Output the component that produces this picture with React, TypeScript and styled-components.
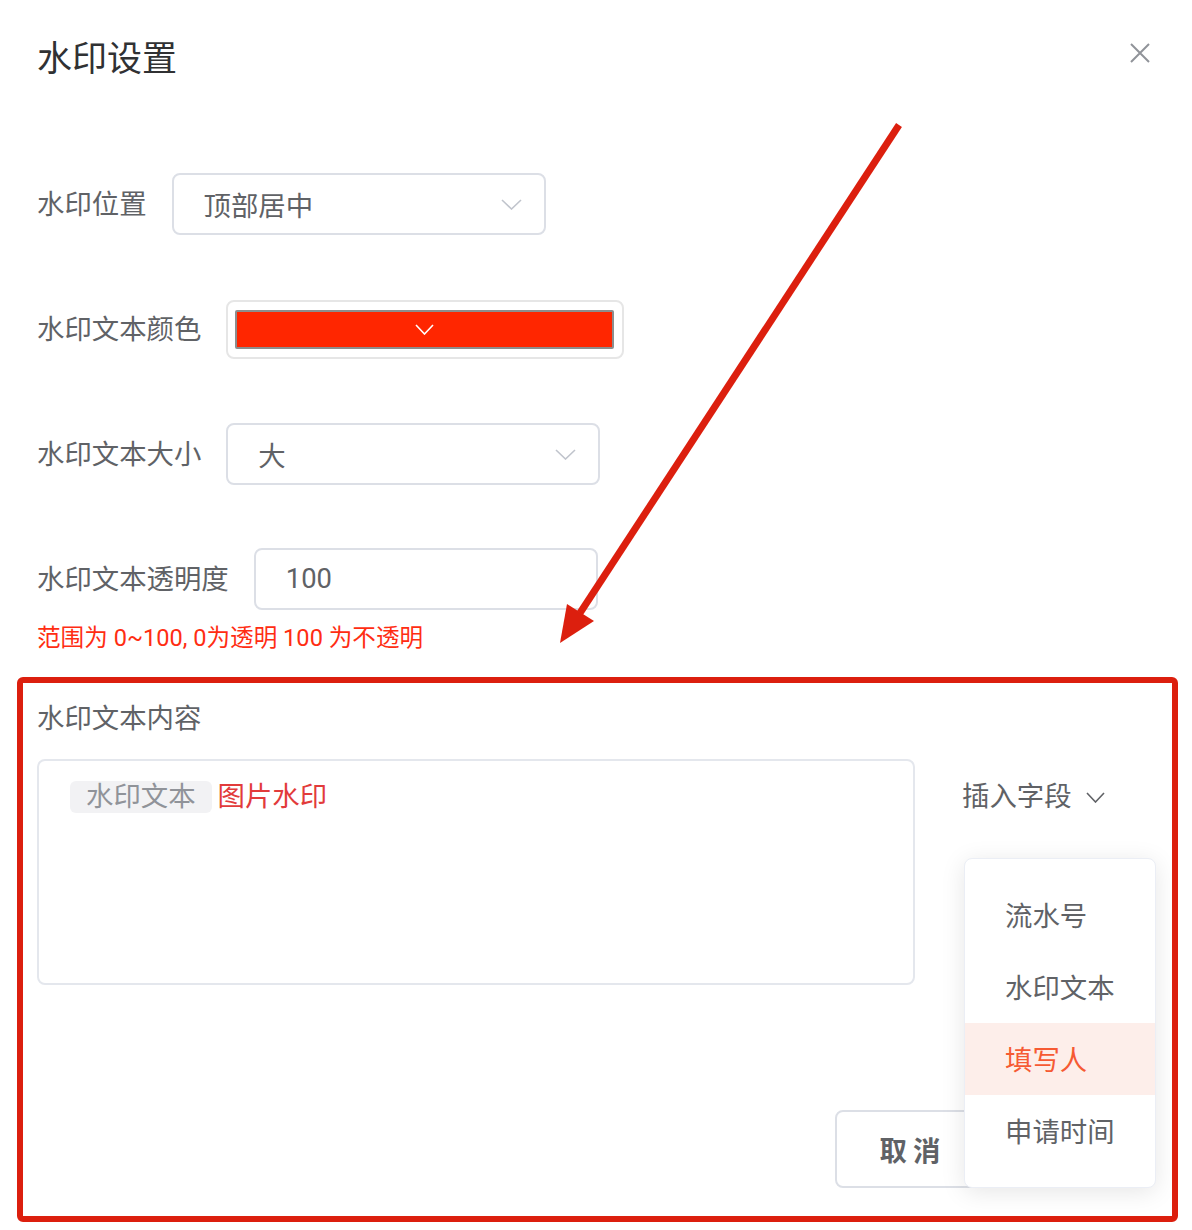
import React from "react";
import styled, { createGlobalStyle } from "styled-components";

const GlobalStyle = createGlobalStyle`
  html, body { margin: 0; padding: 0; background: #ffffff; }
  body { font-family: Roboto, "Noto Sans CJK SC", sans-serif; overflow: hidden; }
  * { box-sizing: border-box; }
`;

const Page = styled.div`
  position: relative;
  width: 1192px;
  height: 1230px;
  padding: 38px 37px 0 37px;
  background: #fff;
`;

const Header = styled.div`
  display: flex;
  justify-content: space-between;
  align-items: flex-start;
`;

const Title = styled.h1`
  margin: 0;
  font-size: 35px;
  line-height: 44px;
  font-weight: 400;
  color: #303133;
`;

const CloseButton = styled.button`
  width: 30px;
  height: 30px;
  padding: 0;
  border: none;
  background: transparent;
  display: flex;
  align-items: center;
  justify-content: center;
`;

const Form = styled.div`
  margin-top: 91px;
  display: flex;
  flex-direction: column;
`;

const FormItem = styled.div<{ $mb: number }>`
  display: flex;
  align-items: center;
  height: 62px;
  margin-bottom: ${(p) => p.$mb}px;
`;

const Label = styled.span`
  font-size: 27.4px;
  line-height: 40px;
  padding-top: 2px;
  color: #606266;
  margin-right: 25px;
  white-space: nowrap;
`;

const SelectBox = styled.div<{ $w: number }>`
  width: ${(p) => p.$w}px;
  height: 62px;
  border: 2px solid #dcdfe6;
  border-radius: 8px;
  padding: 0 22px 0 30px;
  display: flex;
  align-items: center;
  justify-content: space-between;
  font-size: 27.4px;
  color: #606266;
`;

const ColorPicker = styled.div`
  width: 398px;
  height: 59px;
  border: 2px solid #e6e6e6;
  border-radius: 8px;
  padding: 8px 8px 8px 7px;
  display: flex;
`;

const ColorSwatch = styled.div<{ $color: string }>`
  flex: 1;
  background: ${(p) => p.$color};
  border: 2px solid #8d8d8d;
  border-radius: 2px;
  display: flex;
  align-items: center;
  justify-content: center;
`;

const Hint = styled.div`
  font-size: 23.6px;
  line-height: 32px;
  color: #ff2d12;
`;

const SectionLabel = styled.div`
  margin-top: 45px;
  font-size: 27.4px;
  line-height: 40px;
  color: #606266;
`;

const ContentRow = styled.div`
  margin-top: 20px;
  display: flex;
  align-items: flex-start;
`;

const TextArea = styled.div`
  width: 878px;
  height: 226px;
  border: 2px solid #e4e7ed;
  border-radius: 8px;
  padding: 20px 31px;
  display: flex;
  align-items: flex-start;
`;

const Tag = styled.span`
  height: 32px;
  line-height: 32px;
  padding: 0 16px;
  border-radius: 6px;
  background: #f2f2f4;
  color: #909399;
  font-size: 27.4px;
`;

const ImageMark = styled.span`
  margin-left: 6px;
  line-height: 32px;
  font-size: 27.4px;
  color: #e23b3b;
`;

const InsertWrap = styled.div`
  position: relative;
  margin-left: 47px;
`;

const InsertTrigger = styled.div`
  margin-top: 18px;
  display: flex;
  align-items: center;
  gap: 14px;
  font-size: 27.4px;
  line-height: 40px;
  color: #606266;
`;

const Dropdown = styled.ul`
  position: absolute;
  top: 99px;
  left: 2px;
  width: 192px;
  margin: 0;
  padding: 20px 0;
  list-style: none;
  background: #fff;
  border: 1px solid #ebeef5;
  border-radius: 8px;
  box-shadow: 0 4px 24px rgba(0, 0, 0, 0.1);
  z-index: 2;
`;

const DropItem = styled.li<{ $active?: boolean }>`
  height: 72px;
  line-height: 76px;
  padding-left: 40px;
  font-size: 27.4px;
  color: ${(p) => (p.$active ? "#f65a33" : "#606266")};
  background: ${(p) => (p.$active ? "#fdeeea" : "transparent")};
`;

const Footer = styled.div`
  margin-top: 125px;
  padding-right: 170px;
  display: flex;
  justify-content: flex-end;
`;

const Button = styled.button`
  width: 150px;
  height: 78px;
  border-radius: 8px;
  border: 2px solid #dcdfe6;
  background: #fff;
  color: #606266;
  font-family: Roboto, "Noto Sans CJK SC", sans-serif;
  font-size: 27.4px;
  font-weight: 700;
  letter-spacing: 6px;
  padding: 0 0 0 6px;
`;

const Overlay = styled.svg`
  position: absolute;
  left: 0;
  top: 0;
  pointer-events: none;
  z-index: 5;
`;

const Chevron = ({ color = "#c0c4cc", w = 21, h = 11 }: { color?: string; w?: number; h?: number }) => (
  <svg width={w} height={h} viewBox={`0 0 ${w} ${h}`}>
    <polyline
      points={`1,1 ${w / 2},${h - 1} ${w - 1},1`}
      fill="none"
      stroke={color}
      strokeWidth={1.6}
    />
  </svg>
);

export default function App() {
  return (
    <>
      <GlobalStyle />
      <Page>
        <Header>
          <Title>水印设置</Title>
          <CloseButton aria-label="close">
            <svg width="20" height="20" viewBox="0 0 20 20">
              <path d="M1 1 L19 19 M19 1 L1 19" stroke="#909399" strokeWidth="2" />
            </svg>
          </CloseButton>
        </Header>

        <Form>
          <FormItem $mb={63}>
            <Label>水印位置</Label>
            <SelectBox $w={374}>
              <span>顶部居中</span>
              <Chevron />
            </SelectBox>
          </FormItem>
          <FormItem $mb={63}>
            <Label>水印文本颜色</Label>
            <ColorPicker>
              <ColorSwatch $color="#ff2600">
                <Chevron color="#ffffff" w={19} h={11} />
              </ColorSwatch>
            </ColorPicker>
          </FormItem>
          <FormItem $mb={63}>
            <Label>水印文本大小</Label>
            <SelectBox $w={374}>
              <span>大</span>
              <Chevron />
            </SelectBox>
          </FormItem>
          <FormItem $mb={12}>
            <Label>水印文本透明度</Label>
            <SelectBox $w={344}>
              <span>100</span>
            </SelectBox>
          </FormItem>
          <Hint>范围为 0~100, 0为透明 100 为不透明</Hint>

          <SectionLabel>水印文本内容</SectionLabel>
          <ContentRow>
            <TextArea>
              <Tag>水印文本</Tag>
              <ImageMark>图片水印</ImageMark>
            </TextArea>
            <InsertWrap>
              <InsertTrigger>
                <span>插入字段</span>
                <Chevron color="#606266" w={19} h={11} />
              </InsertTrigger>
              <Dropdown>
                <DropItem>流水号</DropItem>
                <DropItem>水印文本</DropItem>
                <DropItem $active>填写人</DropItem>
                <DropItem>申请时间</DropItem>
              </Dropdown>
            </InsertWrap>
          </ContentRow>

          <Footer>
            <Button>取消</Button>
          </Footer>
        </Form>

        <Overlay width="1192" height="1230" viewBox="0 0 1192 1230">
          <rect x="20" y="680" width="1155" height="539" rx="3" fill="none" stroke="#dc1f0e" strokeWidth="6" />
          <line x1="899" y1="125" x2="580" y2="613" stroke="#dc1f0e" strokeWidth="7" />
          <polygon points="560,643 567,604 594,621" fill="#dc1f0e" />
        </Overlay>
      </Page>
    </>
  );
}
